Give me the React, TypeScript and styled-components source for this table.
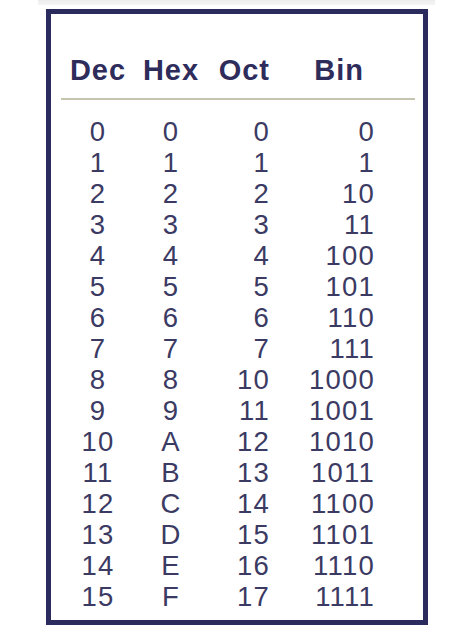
import React from "react";
import styled, { createGlobalStyle } from "styled-components";

const Global = createGlobalStyle`
  html, body { margin: 0; padding: 0; background: #ffffff; }
  body { font-family: "Liberation Sans", Arial, sans-serif; }
`;

const Page = styled.div`
  display: flex;
  flex-direction: column;
  align-items: flex-start;
  padding-left: 38px;
  width: 474px;
  height: 632px;
  box-sizing: border-box;
  overflow: hidden;
`;

const TopStrip = styled.div`
  width: 397px;
  height: 5px;
  background: linear-gradient(#ececec, #f5f5f5);
`;

const Frame = styled.div`
  margin-top: 4px;
  margin-left: 8px;
  width: 382px;
  box-sizing: border-box;
  border: 5px solid #2c2b5e;
  padding: 40px 8px 8px 10px;
  background: #ffffff;
`;

const cols = "74px 72px 63px 105px 1fr";

const HeadRow = styled.div`
  display: grid;
  grid-template-columns: ${cols};
  padding-bottom: 12px;
  border-bottom: 2px solid #c6c6b0;
  font-size: 29px;
  line-height: 32px;
  font-weight: 700;
  letter-spacing: 1px;
  color: #2e2c5b;
`;

const Body = styled.div`
  margin-top: 16px;
  display: flex;
  flex-direction: column;
`;

const DataRow = styled.div`
  display: grid;
  grid-template-columns: ${cols};
  font-size: 27.5px;
  line-height: 31px;
  letter-spacing: 1.2px;
  color: #3b3a63;
`;

const Cell = styled.div<{ $align: "center" | "right"; $padRight?: number }>`
  text-align: ${(p) => p.$align};
  padding-right: ${(p) => p.$padRight ?? 0}px;
  white-space: nowrap;
`;

const rows = Array.from({ length: 16 }, (_, i) => ({
  dec: String(i),
  hex: i.toString(16).toUpperCase(),
  oct: i.toString(8),
  bin: i.toString(2),
}));

export default function App() {
  return (
    <Page>
      <Global />
      <TopStrip />
      <Frame>
        <HeadRow>
          <Cell $align="center">Dec</Cell>
          <Cell $align="center">Hex</Cell>
          <Cell $align="right">Oct</Cell>
          <Cell $align="right" $padRight={11}>Bin</Cell>
          <div />
        </HeadRow>
        <Body>
          {rows.map((r) => (
            <DataRow key={r.dec}>
              <Cell $align="center">{r.dec}</Cell>
              <Cell $align="center">{r.hex}</Cell>
              <Cell $align="right">{r.oct}</Cell>
              <Cell $align="right">{r.bin}</Cell>
              <div />
            </DataRow>
          ))}
        </Body>
      </Frame>
    </Page>
  );
}
